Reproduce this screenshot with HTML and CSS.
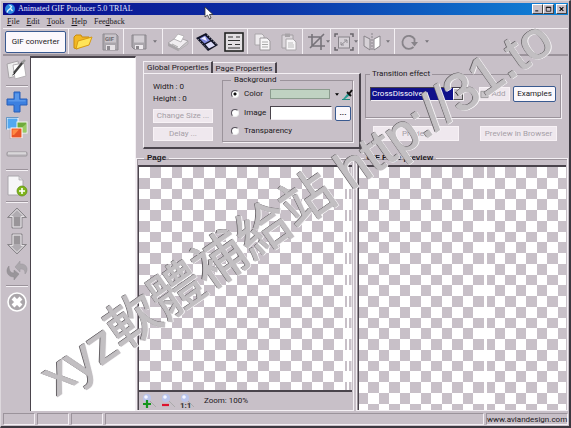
FILE: index.html
```html
<!DOCTYPE html>
<html lang="en">
<head>
<meta charset="utf-8">
<title>Animated GIF Producer 5.0 TRIAL</title>
<link rel="stylesheet" href="styles.css">
</head>
<body>
<div class="window">
  <header class="titlebar">
    <svg class="app-icon" viewBox="0 0 10 10"><circle cx="5" cy="5" r="5" fill="#2c8be0"/><path d="M4.500 1.200L6.500 2.500L5.500 4.500L7.500 7M5.300 4.500L3 6.500L2 8.500" stroke="#dff2ff" stroke-width="1.300" fill="none"/></svg>
    <h1>Animated GIF Producer 5.0 TRIAL</h1>
    <div class="caption-buttons">
      <button aria-label="Minimize"><svg viewBox="0 0 8 8"><path d="M1 6.500H5" stroke="#000" stroke-width="1.300"/></svg></button>
      <button aria-label="Maximize"><svg viewBox="0 0 8 8"><path d="M1 1.500H7V7H1Z M1 2H7" stroke="#000" fill="none"/></svg></button>
      <button class="close" aria-label="Close"><svg viewBox="0 0 8 8"><path d="M1.500 1.500L6.500 6.500M6.500 1.500L1.500 6.500" stroke="#000" stroke-width="1.400"/></svg></button>
    </div>
  </header>

  <nav class="menu">
    <a href="#"><u>F</u>ile</a><a href="#"><u>E</u>dit</a><a href="#"><u>T</u>ools</a><a href="#"><u>H</u>elp</a><a href="#">Fee<u>d</u>back</a>
  </nav>

  <div class="toolbar">
    <button class="push converter">GIF converter</button>
    <div class="group pair">
      <button class="tool" aria-label="Open"><svg viewBox="0 0 20 20"><path d="M1 5L3 3H8L9 5H16V8L4 17L1 16Z" fill="#f2b824" stroke="#c98a0c"/><path d="M5 9L19 5L16 13L3 17Z" fill="#ffe458" stroke="#d89a14"/></svg></button>
      <button class="tool" aria-label="Save GIF"><svg viewBox="0 0 20 20"><path d="M3 2H16L18 4V18H3Z" fill="#aaa6ac" stroke="#8e8a90"/><rect x="5" y="2.500" width="11" height="8" fill="#c9c4ca"/><text x="5" y="9" class="floppy-text">GIF</text><rect x="6" y="13" width="9" height="5" fill="#e6e2e6"/><rect x="7" y="14" width="3" height="4" fill="#8e8a90"/></svg></button>
    </div>
    <div class="group drop">
      <button class="tool" aria-label="Save"><svg viewBox="0 0 20 20"><path d="M3 3H17V17H5L3 15Z" fill="#aaa6ac" stroke="#8a868c"/><rect x="5" y="3.500" width="10" height="7" fill="#d2cdd3"/><rect x="6" y="13" width="8" height="4" fill="#eeeaee"/><rect x="7" y="14" width="3" height="3" fill="#8a868c"/></svg></button>
      <button class="arrow" aria-label="Save options"><svg viewBox="0 0 5 3"><path d="M0 0H5L2.500 3Z"/></svg></button>
    </div>
    <div class="group single">
      <button class="tool wide" aria-label="Print"><svg viewBox="0 0 22 20"><path d="M1 11L10 5L21 9L12 17Z" fill="#f0edf0" stroke="#aaa6aa"/><path d="M7 7L11 2L17 4L14 10Z" fill="#fff" stroke="#b8b4b8"/><path d="M1 11V14L11 19L12 17Z" fill="#a9a5a9"/><path d="M12 17L11 19L21 12V9Z" fill="#c9c6c9" stroke="#a29ea2" stroke-width=".500"/><path d="M5 12L11 15" stroke="#aaa"/></svg></button>
    </div>
    <div class="group pair">
      <button class="tool wide" aria-label="Film"><svg viewBox="0 0 22 20"><path d="M0 6L10 1L22 13L12 19Z" fill="#111326"/><path d="M3.500 6.500L9 3.500L14 8.500L8.500 11.500Z" fill="#8088dc"/><path d="M9.500 12.500L15 9.500L19 13.500L13 16.500Z" fill="#dcdcf8"/><path d="M5 6.500L9 4.500L11 9Z" fill="#eef"/><path d="M2 7L12 17.500M11 3L20.500 12.500" stroke="#eee" stroke-dasharray="1 2" stroke-width=".700"/></svg></button>
      <button class="tool" aria-label="Page list"><svg viewBox="0 0 20 20"><rect x="1" y="1" width="18" height="18" fill="#e2dfe2" stroke="#222" stroke-width="1.600"/><path d="M4 5H9M12 5H16M4 8.500H16M4 12.500H8M11 12.500H16M4 16H16" stroke="#333" stroke-width="1.200"/></svg></button>
    </div>
    <div class="group pair">
      <button class="tool" aria-label="Copy"><svg viewBox="0 0 20 20"><path d="M3 2H10L12 4V13H3Z" fill="#eeebee" stroke="#aaa6aa"/><path d="M8 6H15L18 9V18H8Z" fill="#f8f6f8" stroke="#9c989c"/><path d="M10 10H16M10 12.500H16M10 15H16" stroke="#aaa"/></svg></button>
      <button class="tool" aria-label="Paste"><svg viewBox="0 0 20 20"><path d="M3 3H14V16H3Z" fill="#dad5da" stroke="#a29ea2"/><path d="M6 1.500H11V5H6Z" fill="#a8a4a8"/><path d="M7 7H14L17 10V18H7Z" fill="#f7f5f7" stroke="#aaa6aa"/><path d="M9 11H14M9 13H15M9 15H15" stroke="#bbb"/></svg></button>
    </div>
    <div class="group drop tight">
      <button class="tool" aria-label="Crop"><svg viewBox="0 0 20 20"><path d="M6 2V14H19M2 5H15V18M4 16L18 2" fill="none" stroke="#77737a" stroke-width="1.600"/></svg></button>
      <button class="arrow" aria-label="Crop options"><svg viewBox="0 0 5 3"><path d="M0 0H5L2.500 3Z"/></svg></button>
    </div>
    <div class="group drop tight">
      <button class="tool" aria-label="Resize"><svg viewBox="0 0 20 20"><rect x="4.500" y="5" width="11" height="11" fill="#d5d0d6" stroke="#88848a"/><path d="M1 5V2H4M16 2H19V5M19 15V18H16M4 18H1V15" fill="none" stroke="#6a666c" stroke-width="1.500"/><path d="M7 13L13 8M10 8H13V11M7 10V13H10" fill="none" stroke="#918d93"/></svg></button>
      <button class="arrow" aria-label="Resize options"><svg viewBox="0 0 5 3"><path d="M0 0H5L2.500 3Z"/></svg></button>
    </div>
    <div class="group drop flip">
      <button class="tool" aria-label="Flip"><svg viewBox="0 0 20 20"><path d="M2 4L8 7V18L2 14Z" fill="#d6d1d6" stroke="#88848a"/><path d="M12 7L18 4V14L12 18Z" fill="#fff" stroke="#88848a"/><path d="M10 1V19" stroke="#88848a" stroke-dasharray="2 1"/></svg></button>
      <button class="arrow" aria-label="Flip options"><svg viewBox="0 0 5 3"><path d="M0 0H5L2.500 3Z"/></svg></button>
    </div>
    <div class="group drop last">
      <button class="tool" aria-label="Rotate"><svg viewBox="0 0 20 20"><path d="M14.500 15A6.500 6.500 0 1 1 15.500 7V11" fill="none" stroke="#88848a" stroke-width="1.800"/><path d="M12 10H19L15.500 14.500Z" fill="#88848a"/></svg></button>
      <button class="arrow" aria-label="Rotate options"><svg viewBox="0 0 5 3"><path d="M0 0H5L2.500 3Z"/></svg></button>
    </div>
  </div>

  <main class="main">
    <aside class="sidebar">
      <button aria-label="Edit page"><svg viewBox="0 0 22 22"><path d="M1 5L12 2L14 16L3 19Z" fill="#eee" stroke="#a8a4a8"/><path d="M7 6L18 4L20 17L9 20Z" fill="#fff" stroke="#b5b1b5"/><path d="M8 14L17 3" stroke="#444" stroke-width="2.400"/><path d="M16 4L19 1" stroke="#999" stroke-width="2.400"/><path d="M6.500 16L9 14" stroke="#111"/></svg></button>
      <hr>
      <button aria-label="Add"><svg viewBox="0 0 22 22"><path d="M8 1H14V8H21V14H14V21H8V14H1V8H8Z" fill="#3c80e0" stroke="#285fb8"/><path d="M9 2.500H13V9H19.500V10.500H2.500V9H9Z" fill="#5a98ea"/></svg></button>
      <button aria-label="Add images"><svg viewBox="0 0 22 22"><rect x="1" y="1" width="11" height="11" fill="#52a8f0" stroke="#f4f8fc"/><path d="M.500 12.500V.500H12.500" fill="none" stroke="#3979b5" stroke-width=".700"/><rect x="11" y="5" width="10" height="11" fill="#6faa3c" stroke="#f2f6ee"/><path d="M12 14L20 7V15H12Z" fill="#9acb62"/><rect x="5" y="11" width="11" height="10" fill="#e85526" stroke="#fff"/><path d="M6.500 12.500H13L8 18H6.500Z" fill="#ff8a42"/><path d="M4 22V10.500M16.500 21.500H4" stroke="#b3a5aa" stroke-width=".600" fill="none"/></svg></button>
      <button aria-label="Remove"><svg viewBox="0 0 22 22"><rect x="1" y="9" width="20" height="4" rx="1" fill="#c5c1c6" stroke="#99959a"/><path d="M2 10H20" stroke="#eee"/></svg></button>
      <hr>
      <button aria-label="New page"><svg viewBox="0 0 22 22"><path d="M2 1H13L17 5V20H2Z" fill="#f7f6f8" stroke="#aaa6ac"/><path d="M13 1V5H17" fill="#dcd9dd" stroke="#aaa6ac" stroke-width=".700"/><circle cx="16" cy="16" r="5" fill="#7fb51c" stroke="#5b8a10" stroke-width=".700"/><path d="M16 13V19M13 16H19" stroke="#fff" stroke-width="1.600"/></svg></button>
      <hr>
      <button aria-label="Move up"><svg viewBox="0 0 22 22"><path d="M11 1L20.500 10.500H16V21H6V10.500H1.500Z" fill="#b0acb1" stroke="#8a868b"/><path d="M11 2.500L18 9.500H15V20H7V9.500H4Z" fill="none" stroke="#e4e1e4"/><path d="M8 10H14V19H8Z" fill="#999599"/></svg></button>
      <button aria-label="Move down"><svg viewBox="0 0 22 22"><path d="M6 1H16V11.500H20.500L11 21L1.500 11.500H6Z" fill="#b0acb1" stroke="#8a868b"/><path d="M7 2H15V12.500H18L11 19.500L4 12.500H7Z" fill="none" stroke="#e4e1e4"/><path d="M8 3H14V11H8Z" fill="#999599"/></svg></button>
      <button aria-label="Refresh"><svg viewBox="0 0 22 22"><path d="M9 8L14 2V5C21 4 23 11 19 15C19 11 18 10 14 10V13Z" fill="#aaa6ab" stroke="#9b979c" stroke-width=".500"/><path d="M13 15L8 21V18C1 18 -1 11 3 7C3 11 4 14 8 14V11Z" fill="#99959a" stroke="#8c888d" stroke-width=".500"/></svg></button>
      <hr>
      <button aria-label="Delete"><svg viewBox="0 0 22 22"><circle cx="11" cy="11" r="9" fill="#aaa6aa" stroke="#fff" stroke-width="1.600"/><path d="M7 7L15 15M15 7L7 15" stroke="#fff" stroke-width="4"/></svg></button>
    </aside>

    <div class="page-list"></div>

    <div class="work">
      <div class="settings">
        <div class="tabs">
          <div class="tab-row" role="tablist">
            <button role="tab" aria-selected="true" class="tab active">Global Properties</button>
            <button role="tab" aria-selected="false" class="tab">Page Properties</button>
          </div>
          <div class="tab-panel">
            <div class="size">
              <p>Width : 0</p>
              <p>Height : 0</p>
              <button class="flat" disabled>Change Size ...</button>
              <button class="flat" disabled>Delay ...</button>
            </div>
            <fieldset class="background">
              <legend>Background</legend>
              <input type="radio" name="bg" id="bg-color" checked>
              <label for="bg-color">Color</label>
              <button class="swatch" aria-label="Background color"></button>
              <span class="pick">
                <svg class="pick-arrow" viewBox="0 0 5 3"><path d="M0 0H5L2.500 3Z"/></svg>
                <svg class="dropper" viewBox="0 0 11 11"><path d="M1 10L6 4L8 6L3 10Z" fill="#2a9b93"/><path d="M5 3L9 7M7 5L10 1" stroke="#111" stroke-width="2"/><path d="M0 10.500H8" stroke="#1c8a80"/></svg>
              </span>
              <input type="radio" name="bg" id="bg-image">
              <label for="bg-image">Image</label>
              <input type="text" class="path" aria-label="Image path">
              <button class="push browse" aria-label="Browse">...</button>
              <input type="radio" name="bg" id="bg-none">
              <label for="bg-none" class="span">Transparency</label>
            </fieldset>
          </div>
        </div>

        <div class="effects">
          <fieldset class="transition">
            <legend>Transition effect</legend>
            <span class="combo">
              <select aria-label="Transition effect"><option>CrossDissolve</option></select>
              <svg viewBox="0 0 8 10"><path d="M1 3H7L4 7Z"/></svg>
            </span>
            <button class="flat add" disabled><svg viewBox="0 0 10 10"><path d="M1 2H7L9 4V9H1Z" fill="#c9c5c9" stroke="#9a969a"/></svg>Add</button>
            <button class="push examples">Examples</button>
          </fieldset>
          <div class="previews">
            <button class="flat" disabled>Preview</button>
            <button class="flat" disabled>Preview in Browser</button>
          </div>
        </div>
      </div>

      <div class="canvases">
        <fieldset class="canvas-group">
          <legend>Page</legend>
          <svg class="checker">
            <defs>
              <pattern id="page-cells" width="65" height="43" patternUnits="userSpaceOnUse">
                <path class="cell" d="M11 0H22V11H11ZM33 0H43V11H33ZM54 0H65V11H54ZM0 11H11V22H0ZM22 11H33V22H22ZM43 11H54V22H43ZM11 22H22V32H11ZM33 22H43V32H33ZM54 22H65V32H54ZM0 32H11V43H0ZM22 32H33V43H22ZM43 32H54V43H43Z"/>
              </pattern>
            </defs>
            <rect width="100%" height="100%" fill="url(#page-cells)"/>
            <path d="M205 0V400M209 0V400" stroke="#fff" stroke-width="2"/>
          </svg>
          <div class="zoombar">
            <button aria-label="Zoom in"><svg viewBox="0 0 15 15"><path d="M8 7L14 13" stroke="#aaa"/><circle cx="5" cy="4" r="4" fill="#b9c4ec"/><circle cx="4" cy="3" r="1.800" fill="#f4f6ff"/><path d="M5 6V14M1 10H9" stroke="#16951e" stroke-width="2.200"/></svg></button>
            <button aria-label="Zoom out"><svg viewBox="0 0 15 15"><path d="M8 7L14 13" stroke="#aaa"/><circle cx="5" cy="4" r="4" fill="#b9c4ec"/><circle cx="4" cy="3" r="1.800" fill="#f4f6ff"/><path d="M1 11H8" stroke="#dc1230" stroke-width="2.200"/></svg></button>
            <button aria-label="Actual size"><svg viewBox="0 0 15 15"><path d="M8 7L14 13" stroke="#aaa"/><circle cx="5" cy="4" r="4" fill="#b9c4ec"/><circle cx="4" cy="3" r="1.800" fill="#f4f6ff"/><text x="0" y="14" class="ratio">1:1</text></svg></button>
            <output>Zoom: 100%</output>
          </div>
        </fieldset>

        <fieldset class="canvas-group">
          <legend>GIF Page preview</legend>
          <svg class="checker">
            <defs>
              <pattern id="preview-cells" x="9" width="21" height="43" patternUnits="userSpaceOnUse">
                <path class="cell" d="M0 0H11V11H0ZM11 11H21V22H11ZM0 22H11V32H0ZM11 32H21V43H11Z"/>
              </pattern>
              <pattern id="preview-cells-next" x="146" width="21" height="43" patternUnits="userSpaceOnUse">
                <path class="cell" d="M0 0H11V11H0ZM11 11H21V22H11ZM0 22H11V32H0ZM11 32H21V43H11Z"/>
              </pattern>
            </defs>
            <rect width="125" height="100%" fill="url(#preview-cells)"/>
            <rect x="128" width="100%" height="100%" fill="url(#preview-cells-next)"/>
          </svg>
        </fieldset>
      </div>
    </div>
  </main>

  <footer class="status">
    <span></span><span></span><span></span><span class="grow"></span><a href="#">www.avlandesign.com</a>
  </footer>

  <div class="watermark">xyz軟體補給站 http://31.to</div>
  <svg class="pointer" viewBox="0 0 10 14"><path d="M1 1V11L3.500 9L5.500 13L7 12L5.500 8.500H9Z" fill="#fff" stroke="#333" stroke-width=".800"/></svg>
</div>
</body>
</html>
```
FILE: styles.css
```css
:root {
  --face: #c8c0c8;
  --light: #f4f0f4;
  --shade: #9b939b;
  --dark: #4a444c;
  --ui: Roboto, "Liberation Sans", sans-serif;
}

* { box-sizing: border-box; }

body { margin: 0; background: var(--face); }

button, input, select, fieldset, legend, p, h1, hr {
  margin: 0;
  padding: 0;
  border: 0;
  font: inherit;
  color: inherit;
}

button { background: none; white-space: nowrap; }
svg { display: block; }

.window {
  position: relative;
  display: flex;
  flex-direction: column;
  min-height: 100vh;
  overflow: hidden;
  padding: 2px 1px 0 2px;
  border-top: 1px solid #ddd8dd;
  border-left: 1px solid #ddd8dd;
  border-right: 2px solid #3c3840;
  border-bottom: 2px solid #3c3840;
  font: 8px/12px var(--ui);
  color: #1c181c;
}

/* Title and menu */
.titlebar {
  display: flex;
  align-items: center;
  gap: 3px;
  height: 12px;
  padding: 0 1px 0 2px;
  background: linear-gradient(90deg, #0a0c8c, #0c2ea4 45%, #1084d8);
}
.app-icon { width: 10px; height: 10px; }
.titlebar h1 {
  flex: 1;
  font: 8px/12px "Liberation Serif", serif;
  color: #e4e8ff;
}
.caption-buttons { display: flex; }
.caption-buttons button {
  width: 11px;
  height: 10px;
  padding: 1px;
  background: var(--face);
  border: 1px solid;
  border-color: #fff #444 #444 #fff;
}
.caption-buttons .close { margin-left: 2px; }
.caption-buttons svg { width: 7px; height: 6px; }

.menu {
  display: flex;
  gap: 7px;
  height: 13px;
  padding: 0 4px;
  font: 8px/13px "Liberation Serif", serif;
}
.menu a { color: #1c181c; text-decoration: none; }

/* Toolbar */
.toolbar {
  display: flex;
  align-items: center;
  height: 28px;
  padding-left: 2px;
  border-top: 1px solid var(--light);
  border-bottom: 2px solid var(--shade);
}
.push {
  background: #fbf8fc;
  border: 1px solid #3a5a90;
  border-radius: 2px;
  text-align: center;
}
.converter { width: 61px; height: 22px; margin-right: 2px; }
.group {
  display: flex;
  align-items: center;
  height: 25px;
  border-left: 1px solid var(--light);
}
.pair { width: 55px; justify-content: space-around; }
.single { width: 30px; justify-content: center; }
.drop { width: 39px; padding: 0 5px; justify-content: space-between; }
.tight { width: 28px; padding: 0 1px 0 3px; }
.flip { width: 36px; padding: 0 4px 0 3px; }
.last { padding: 0 4px; }
.tool svg { width: 20px; height: 20px; }
.tool.wide svg { width: 22px; height: 20px; }
.arrow svg { width: 4px; height: 3px; fill: #77737a; }
.floppy-text { font: bold 6px var(--ui); fill: #6c686e; }

/* Main area */
.main { display: flex; flex: 1; }
.sidebar {
  display: flex;
  flex-direction: column;
  align-items: center;
  gap: 2px;
  width: 27px;
  padding-top: 2px;
}
.sidebar svg { width: 22px; height: 22px; }
.sidebar button { height: 24px; padding: 1px; }
.sidebar hr {
  width: 22px;
  height: 2px;
  margin: 1px 0;
  border-top: 1px solid var(--shade);
  border-bottom: 1px solid var(--light);
}
.page-list {
  width: 106px;
  background: #fff;
  border-top: 2px solid var(--dark);
  border-left: 1px solid var(--dark);
  border-right: 1px solid var(--light);
}
.work { display: flex; flex-direction: column; flex: 1; min-width: 0; }
.settings {
  display: grid;
  grid-template-columns: 218px 1fr;
  gap: 4px;
  padding: 5px 7px 3px 7px;
}

/* Tabs */
.tab-row { display: flex; align-items: flex-end; height: 12px; }
.tab {
  height: 11px;
  padding: 0 3px;
  line-height: 11px;
  border-top: 1px solid var(--light);
  border-right: 2px solid var(--dark);
}
.tab.active { height: 12px; padding: 0 2px 0 3px; border-left: 1px solid var(--light); }
.tab-panel {
  display: grid;
  grid-template-columns: 60px 1fr;
  gap: 9px;
  height: 76px;
  padding: 0 6px 5px 9px;
  border: 1px solid var(--light);
  border-right: 2px solid var(--dark);
  border-bottom: 2px solid var(--dark);
}
.size { display: flex; flex-direction: column; padding-top: 7px; }
.flat {
  height: 14px;
  background: #efe8ee;
  border: 1px solid #f8f2f6;
  color: #a59ea6;
  line-height: 12px;
}
.size .flat { margin-top: 4px; }

fieldset { border: 1px solid var(--shade); box-shadow: 1px 1px 0 var(--light); }
.background {
  display: grid;
  grid-template-columns: 9px 22px 61px 18px;
  grid-template-rows: 18px 20px 16px;
  column-gap: 4px;
  align-items: center;
  min-width: 0;
  padding: 0 2px 0 8px;
  margin-top: 1px;
}
.background legend { height: 10px; padding: 0 3px; line-height: 10px; }
.background .span { grid-column: 2 / 5; }
input[type="radio"] {
  appearance: none;
  width: 8px;
  height: 8px;
  border: 1px solid;
  border-color: #55505a #eee #eee #55505a;
  border-radius: 50%;
  background: #fff;
}
input[type="radio"]:checked { background: radial-gradient(#111 0 1px, #fff 2px); }
.swatch { width: 60px; height: 10px; background: #c0d2c2; border: 1px solid #8b9b8d; }
.pick { display: flex; align-items: center; gap: 3px; }
.pick-arrow { width: 4px; height: 3px; }
.dropper { width: 11px; height: 11px; }
.path {
  width: 62px;
  height: 14px;
  background: #fff;
  border: 1px solid;
  border-color: var(--dark) var(--light) var(--light) var(--dark);
}
.browse { width: 16px; height: 15px; font-weight: bold; }

/* Transition */
.effects { display: flex; flex-direction: column; padding-top: 8px; }
.transition {
  display: flex;
  align-items: flex-start;
  justify-content: space-between;
  height: 49px;
  padding: 7px 4px 0 4px;
}
.transition legend { height: 10px; padding: 0 2px; line-height: 10px; }
.combo {
  display: flex;
  width: 94px;
  height: 14px;
  margin-top: 1px;
  border: 1px solid;
  border-color: var(--dark) var(--light) var(--light) var(--dark);
  background: #fff;
}
.combo select {
  appearance: none;
  flex: 1;
  height: 12px;
  padding: 0 1px;
  background: #10108a;
  color: #fff;
  line-height: 12px;
}
.combo svg { width: 10px; height: 12px; background: var(--face); border: 1px solid; border-color: #fff #555 #555 #fff; }
.add { display: flex; align-items: center; gap: 2px; margin: 1px 0 0 12px; padding: 0 3px 0 0; }
.add svg { width: 9px; height: 10px; }
.examples { width: 43px; height: 16px; }
.previews { display: flex; justify-content: space-between; padding: 8px 4px 0 8px; }
.previews .flat { height: 15px; width: 86px; }
.previews .flat:last-child { width: 77px; }

/* Canvases */
.canvases { display: grid; grid-template-columns: 217fr 212fr; gap: 2px; flex: 1; }
.canvas-group {
  display: flex;
  flex-direction: column;
  min-width: 0;
  border-color: var(--light);
  box-shadow: inset 1px 1px 0 var(--shade);
  padding: 1px 1px 0 1px;
}
.canvas-group legend {
  height: 12px;
  margin-left: 6px;
  padding: 0 3px;
  font: bold 8px/12px "Liberation Sans", sans-serif;
}
.checker {
  flex: 1;
  width: 100%;
  height: 0;
  min-height: 0;
  background: #fff;
  border-top: 2px solid var(--dark);
  border-left: 1px solid var(--dark);
}
.cell { fill: #c8c0c8; }
.zoombar {
  display: flex;
  align-items: center;
  gap: 4px;
  height: 20px;
  padding-left: 3px;
  border-top: 2px solid var(--dark);
  border-left: 1px solid var(--dark);
}
.zoombar svg { width: 15px; height: 15px; }
.zoombar output { margin-left: 5px; }
.ratio { font: bold 8px var(--ui); fill: #333; }

/* Status bar */
.status { display: flex; gap: 2px; height: 15px; padding-top: 2px; }
.status span, .status a {
  width: 32px;
  height: 12px;
  border: 1px solid;
  border-color: var(--shade) var(--light) var(--light) var(--shade);
}
.status .grow { flex: 1; }
.status a { width: 82px; line-height: 11px; text-align: center; color: #1c181c; text-decoration: none; }

/* Overlays */
.watermark {
  position: absolute;
  left: 56px;
  top: 348px;
  font: 53px/60px "Liberation Sans", "Noto Sans CJK TC", sans-serif;
  white-space: nowrap;
  color: #c2bfc2;
  -webkit-text-stroke: 1px #c2bfc2;
  text-shadow: 0 -1px 0 #676367, -1px -1px 0 #676367, 0 1px 0 #f6f4f6, 1px 1px 0 #f6f4f6;
  transform: rotate(-35deg);
  transform-origin: 0 48px;
  pointer-events: none;
}
.pointer { position: absolute; left: 203px; top: 5px; width: 10px; height: 14px; }
```
